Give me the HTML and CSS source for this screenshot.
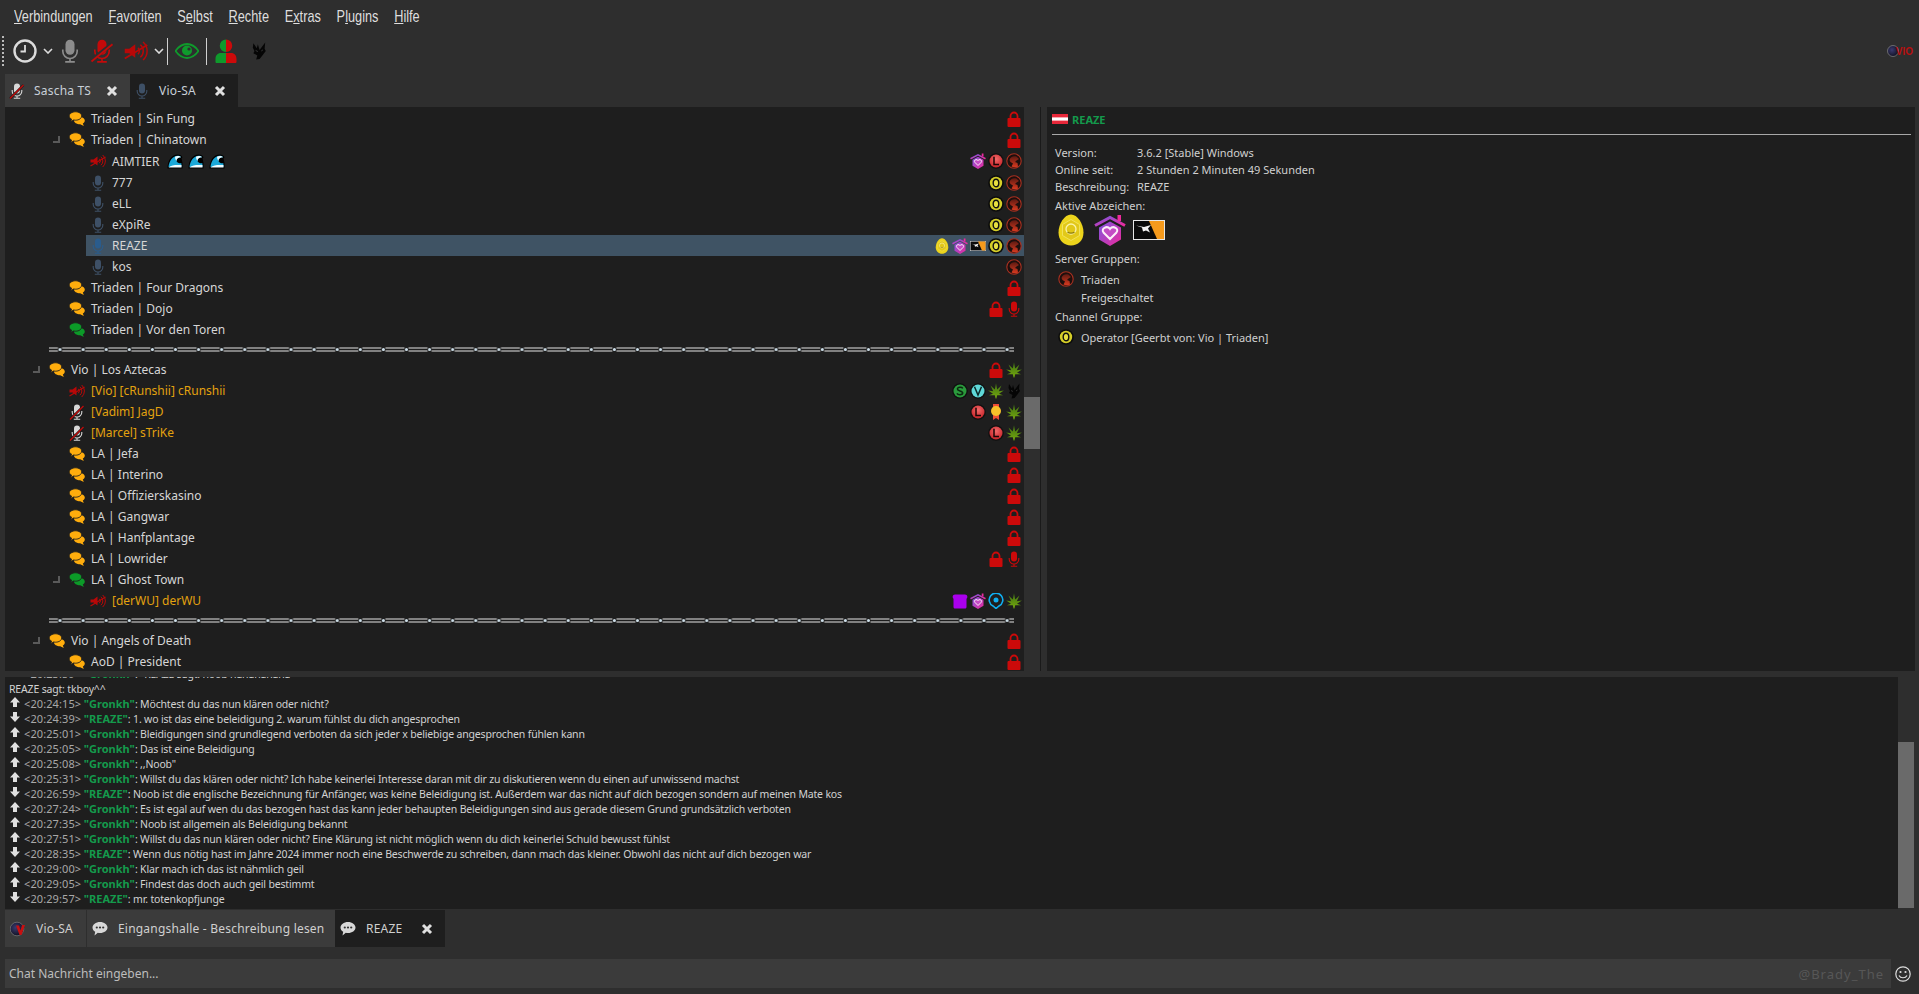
FILE: index.html
```html
<!DOCTYPE html>
<html lang="de">

<head>
    <meta charset="UTF-8">
    <title>TeamSpeak 3</title>
    <link rel="stylesheet" href="styles.css">
</head>

<body>
    <!-- shared icons -->
    <svg class="defs" xmlns="http://www.w3.org/2000/svg">
        <defs>
            <linearGradient id="house-grad" x1="0" y1="0" x2="1" y2="1">
                <stop offset="0" stop-color="#7d55e0" />
                <stop offset="1" stop-color="#ee2a9c" />
            </linearGradient>
            <radialGradient id="red-ball" cx="0.5" cy="0.35" r="0.7">
                <stop offset="0" stop-color="#f26a6a" />
                <stop offset="1" stop-color="#c41e24" />
            </radialGradient>
            <radialGradient id="logo-ball" cx="0.4" cy="0.4" r="0.7">
                <stop offset="0" stop-color="#3a3a70" />
                <stop offset="1" stop-color="#0c0c18" />
            </radialGradient>
            <linearGradient id="triad-grad" x1="0" y1="0" x2="0" y2="1">
                <stop offset="0" stop-color="#5e1a12" />
                <stop offset="1" stop-color="#d83a20" />
            </linearGradient>
            <linearGradient id="weed-grad" x1="0" y1="0" x2="0" y2="1">
                <stop offset="0" stop-color="#3f7014" />
                <stop offset="1" stop-color="#74a80e" />
            </linearGradient>
            <pattern id="spacer-tile" width="23.100" height="7" patternUnits="userSpaceOnUse">
                <path d="M0 2h9M13 2h10.100M0 5h9M13 5h10.100" stroke="#e4e4e4" stroke-width="1" />
                <circle cx="11" cy="3.500" r="1.500" fill="#cfe0ea" />
            </pattern>
        </defs>
        <symbol id="mic" viewBox="0 0 16 16">
            <rect x="5" y="0.500" width="6" height="10" rx="3" fill="currentColor" />
            <path d="M3.200 7v1.200a4.800 4.800 0 0 0 9.600 0V7M8 13v2M4.800 15.200h6.400" fill="none" stroke="currentColor" stroke-width="1.100" />
        </symbol>
        <symbol id="mic-off" viewBox="0 0 16 16">
            <rect x="5" y="0.500" width="6" height="10" rx="3" fill="#d8d8d8" />
            <path d="M3.200 7v1.200a4.800 4.800 0 0 0 9.600 0V7M8 13v2M4.800 15.200h6.400" fill="none" stroke="#d8d8d8" stroke-width="1.100" />
            <path d="M1 15.500L14.500 2" stroke="#1e1e1e" stroke-width="2.400" />
            <path d="M1 15.500L14.500 2" stroke="#c40a0a" stroke-width="1.200" />
        </symbol>
        <symbol id="spk-off" viewBox="0 0 16 16">
            <path d="M0.500 6.500h3l4-3v9l-4-3h-3z" fill="#b80808" />
            <path d="M9.300 5.800a3 3 0 0 1 0 4.400M10.900 3.800a5.500 5.500 0 0 1 0 8.400M12.700 2a8 8 0 0 1 0 12" fill="none" stroke="#b80808" stroke-width="1" />
            <path d="M0.500 13L15.500 4" stroke="#b80808" stroke-width="1.300" />
        </symbol>
        <symbol id="lock" viewBox="0 0 16 16">
            <path d="M4.500 8V5a3.500 3.500 0 0 1 7 0v3" fill="none" stroke="#cc0a0a" stroke-width="1.800" />
            <rect x="1.500" y="7" width="13" height="9" rx="1" fill="#cc0a0a" />
        </symbol>
        <symbol id="bubbles" viewBox="0 0 16 16">
            <path d="M9 5.500c3.800 0 6.800 1.700 6.800 4 0 1.300-0.800 2.300-2 3l1 2.500-3.600-1.700C7.500 13.300 5 11.500 5 9.500s1.200-4 4-4z" fill="currentColor" />
            <path d="M6.500 0.800c3.300 0 6.200 1.800 6.200 4.200s-2.900 4.200-6.200 4.200c-0.700 0-1.400-0.100-2-0.200L1.800 10.800l0.700-2.700C1 7.300 0.200 6.200 0.200 5c0-2.400 3-4.200 6.300-4.200z" fill="currentColor" stroke="#1e1e1e" stroke-width="0.900" />
        </symbol>
        <symbol id="speech" viewBox="0 0 16 16">
            <path d="M8 1c4.200 0 7.500 2.500 7.500 5.500S12.200 12 8 12c-0.800 0-1.500-0.100-2.200-0.200L2.500 14.500l0.700-3.700C1.500 9.800 0.500 8.200 0.500 6.500 0.500 3.500 3.800 1 8 1z" fill="#d8d8d8" />
            <circle cx="4.800" cy="6.500" r="1.100" fill="#333" />
            <circle cx="8" cy="6.500" r="1.100" fill="#333" />
            <circle cx="11.200" cy="6.500" r="1.100" fill="#333" />
        </symbol>
        <symbol id="wave" viewBox="0 0 16 16">
            <path d="M0.500 15.500C0.500 7 5 1.500 10.500 1.500c2.500 0 4.500 1 5 3l-1 0.500 1 5v5.500z" fill="#000" />
            <path d="M1.500 14C2 8 6 2.800 10.500 2.800c1.800 0 3 .5 3.600 1.500C11.500 4.200 9.500 5.500 9.500 7.500c0 2 2.200 3 4.900 2.800V14z" fill="#1aa8d8" />
            <path d="M1.500 14.500c3-3 8-2.500 13-2.500v2.500zM8 3.800C10 2.500 12.800 2.800 14.100 4.300 11.500 4.200 9.500 5.500 9.500 8 8.500 7 8 5 8 3.800z" fill="#f0fcff" />
        </symbol>
        <symbol id="op" viewBox="0 0 16 16">
            <circle cx="8" cy="8" r="7.800" fill="#0c0c0c" />
            <circle cx="8" cy="8" r="6.200" fill="#d5ce28" />
            <ellipse cx="8" cy="8" rx="2.800" ry="3.800" fill="#e6df40" stroke="#111" stroke-width="1.400" />
        </symbol>
        <symbol id="ball-l" viewBox="0 0 16 16">
            <circle cx="8" cy="8" r="7.800" fill="#101010" />
            <circle cx="8" cy="8" r="6.500" fill="url(#red-ball)" />
            <path d="M6 3.800v7.700h5" fill="none" stroke="#1a0505" stroke-width="1.500" />
        </symbol>
        <symbol id="ball-s" viewBox="0 0 16 16">
            <circle cx="8" cy="8" r="7.800" fill="#101010" />
            <circle cx="8" cy="8" r="6.500" fill="#2a9a3c" />
            <path d="M10.800 5.300C10 4 5.600 3.800 5.400 6c-0.200 2.200 5.500 1.700 5.300 4.100-0.200 2-4.800 2-5.800 0.300" fill="none" stroke="#0c2a10" stroke-width="1.500" />
        </symbol>
        <symbol id="ball-v" viewBox="0 0 16 16">
            <circle cx="8" cy="8" r="7.800" fill="#101010" />
            <circle cx="8" cy="8" r="6.500" fill="#5fd8d8" />
            <path d="M4.500 3.800L8 12l3.500-8.200" fill="none" stroke="#0c2a2a" stroke-width="1.500" />
        </symbol>
        <symbol id="triad" viewBox="0 0 16 16">
            <circle cx="8" cy="8" r="7.200" fill="#1e0f0d" stroke="#a83020" stroke-width="1.100" />
            <path d="M3.500 7C4 3.500 8 2.500 10.500 3.500L13 6l-2.500 1.500L9 9l2.500 1 0.500 3.500c-1.500 1-5 1-6.500 0L7 10.500 4.500 9z" fill="url(#triad-grad)" />
        </symbol>
        <symbol id="weed" viewBox="0 0 16 16">
            <path d="M8 0.300L9.200 6.500 13.500 2.500 10.800 8.300 15.800 7.500 11 10.800 15 12.300 9.200 12.200 8.400 15.500H7.600L6.800 12.200 1 12.300 5 10.800 0.200 7.500 5.200 8.300 2.500 2.500 6.800 6.500z" fill="url(#weed-grad)" />
        </symbol>
        <symbol id="wolf" viewBox="0 0 16 16">
            <path d="M3 1l3 4.500 1-3.500 1.500 5L13.500 0.500 13 6l1 2-3 4-2.500 3-3 0.500 1-3.500L3 10l1-2-1.500-3z" fill="#050505" />
            <path d="M5 7.500l2 1M10 8l1.500-1" stroke="#3a3a3a" stroke-width="0.800" />
        </symbol>
        <symbol id="house" viewBox="0 0 32 32">
            <path d="M1 11.500L16 3.500l15 8" fill="none" stroke="url(#house-grad)" stroke-width="3" />
            <rect x="23.500" y="1" width="3.500" height="6" fill="#ee2a9c" />
            <path d="M16 7.500L27 13.500V25.500L16 32 5 25.500V13.500z" fill="url(#house-grad)" />
            <path d="M16 25l-6.500-6.500c-3-3.800 3.500-7.500 6.500-3.500 3-4 9.500-.3 6.500 3.500z" fill="#c44cc4" stroke="#fdeef8" stroke-width="2" />
        </symbol>
        <symbol id="egg" viewBox="0 0 26 32">
            <path d="M13 0.500c6.500 0 12.500 9.500 12.500 18 0 8-5.500 13-12.500 13S0.500 26.500 0.500 18.500c0-8.500 6-18 12.500-18z" fill="#ecd41c" />
            <path d="M13 5.500l8.500 5v11L13 26.500l-8.500-5v-11z" fill="#e2c818" stroke="#f4e66a" stroke-width="0.800" />
            <circle cx="13" cy="15" r="5" fill="none" stroke="#fbf3a8" stroke-width="1.300" />
            <path d="M9.500 18c1.500 1.500 5.500 1.500 7 0" fill="none" stroke="#8f7d0a" stroke-width="1.100" />
        </symbol>
        <symbol id="owl" viewBox="0 0 32 20">
            <rect x="0.500" y="0.500" width="31" height="19" fill="#0a0a0a" stroke="#e6e6e6" />
            <path d="M16 1H31V19H24z" fill="#f59a1c" />
            <path d="M3 5.500l8 1.500 7-2-3 3.500 2 4-4-2-3 1-1-4z" fill="#f2f2f2" />
        </symbol>
        <symbol id="bread" viewBox="0 0 16 16">
            <path d="M3 1.500h10c2.500 0 3 3 1.500 4.200V14c0 .8-.5 1.500-1.500 1.500H3c-1 0-1.500-.7-1.500-1.500V5.700C0 4.500.5 1.500 3 1.500z" fill="#aa00ee" />
        </symbol>
        <symbol id="pin" viewBox="0 0 16 16">
            <path d="M8 15.500L5 13A6.800 6.800 0 1 1 11 13z" fill="none" stroke="#10aef0" stroke-width="1.600" />
            <circle cx="8" cy="7" r="2.500" fill="#10aef0" />
        </symbol>
        <symbol id="medal" viewBox="0 0 16 16">
            <path d="M5 0h6v3H5zM5 11h6v5L8 14l-3 2z" fill="#ee4d36" />
            <circle cx="8" cy="7" r="5" fill="#f8c22a" />
        </symbol>
        <symbol id="vio" viewBox="0 0 16 16">
            <circle cx="7" cy="8" r="6.800" fill="url(#logo-ball)" stroke="#888" stroke-width="0.600" />
            <path d="M6 4.500h3l1.500 5 1.500-5.500h3L11.500 14h-2z" fill="#c81010" />
        </symbol>
        <symbol id="x" viewBox="0 0 12 12">
            <path d="M2 2l8 8M10 2l-8 8" stroke="#e0e0e0" stroke-width="3" />
        </symbol>
        <symbol id="up" viewBox="0 0 12 12">
            <path d="M6 1L11 6.500H8V11H4V6.500H1z" fill="#e0e0e0" />
        </symbol>
        <symbol id="down" viewBox="0 0 12 12">
            <path d="M6 11L11 5.500H8V1H4V5.500H1z" fill="#e0e0e0" />
        </symbol>
        <symbol id="spacer-art" viewBox="0 0 966 7" preserveAspectRatio="xMinYMid slice">
            <rect width="966" height="7" fill="url(#spacer-tile)" />
        </symbol>
    </svg>

    <!-- Menu -->
    <div class="menubar">
        <div class="menu-items">
            <span><u>V</u>erbindungen</span>
            <span><u>F</u>avoriten</span>
            <span>S<u>e</u>lbst</span>
            <span><u>R</u>echte</span>
            <span>E<u>x</u>tras</span>
            <span>P<u>l</u>ugins</span>
            <span><u>H</u>ilfe</span>
        </div>
    </div>

    <!-- Toolbar -->
    <div class="toolbar">
        <span class="grip"></span>
        <svg class="tool t-clock" viewBox="0 0 24 24">
            <circle cx="12" cy="12" r="10.500" fill="none" stroke="#dcdcdc" stroke-width="2.400" />
            <path d="M12 6v6.500H7.500" fill="none" stroke="#dcdcdc" stroke-width="1.800" />
        </svg>
        <svg class="chev" viewBox="0 0 10 6"><path d="M1 1l4 4 4-4" fill="none" stroke="#dcdcdc" stroke-width="1.600" /></svg>
        <svg class="tool t-mic"><use href="#mic" /></svg>
        <svg class="tool t-redmic" viewBox="0 0 16 16">
            <rect x="5" y="0.500" width="6" height="10" rx="3" fill="#c40a0a" />
            <path d="M3.200 7v1.200a4.800 4.800 0 0 0 9.600 0V7M8 13v2M4.800 15.200h6.400" fill="none" stroke="#c40a0a" stroke-width="1.100" />
            <path d="M1 14L15 3" stroke="#2e2e2e" stroke-width="2.400" />
            <path d="M1 15L15 3.500" stroke="#c40a0a" stroke-width="1.200" />
        </svg>
        <svg class="tool t-spk"><use href="#spk-off" /></svg>
        <svg class="chev" viewBox="0 0 10 6"><path d="M1 1l4 4 4-4" fill="none" stroke="#dcdcdc" stroke-width="1.600" /></svg>
        <span class="tsep"></span>
        <svg class="tool t-eye" viewBox="0 0 24 16">
            <path d="M0.500 8C4 3 8 1 12 1s8 2 11.500 7C20 13 16 15 12 15S4 13 0.500 8z" fill="none" stroke="#0f9a2c" stroke-width="1.800" />
            <circle cx="12" cy="7.500" r="5" fill="#0f9a2c" />
            <circle cx="14" cy="6" r="1.600" fill="#2e2e2e" />
        </svg>
        <span class="tsep tsep-second"></span>
        <svg class="tool t-user" viewBox="0 0 22 24">
            <path d="M11 0.500a6 6 0 0 0 0 12.500zM11 14H6c-3.500 0-5.500 2.500-5.500 6v3c0 .5.500 1 1 1H11z" fill="#0f9a2c" />
            <path d="M11 0.500a6 6 0 0 1 0 12.500zM11 14h5c3.500 0 5.500 2.500 5.500 6v3c0 .5-.5 1-1 1H11z" fill="#cc0a0a" />
        </svg>
        <svg class="tool t-wolf"><use href="#wolf" /></svg>
        <span class="logo">
            <svg class="ic-logo" viewBox="0 0 12 12"><circle cx="6" cy="6" r="5.500" fill="url(#logo-ball)" stroke="#999" stroke-width="0.600" /></svg>
            <b class="logo-text">VIO</b>
        </span>
    </div>

    <!-- Server tabs -->
    <div class="tabbar">
        <div class="tab tab-off">
            <svg class="ic"><use href="#mic-off" /></svg>
            <span class="tab-name">Sascha TS</span>
            <svg class="close"><use href="#x" /></svg>
        </div>
        <div class="tab tab-on tab-vio">
            <svg class="ic mic-blue"><use href="#mic" /></svg>
            <span class="tab-name">Vio-SA</span>
            <svg class="close"><use href="#x" /></svg>
        </div>
    </div>

    <div class="main">
        <!-- Channel tree -->
        <div class="tree-panel">
            <div class="tree">
                <div class="row ch"><svg class="ic orange"><use href="#bubbles" /></svg><span>Triaden | Sin Fung</span><span class="flags"><svg class="ic"><use href="#lock" /></svg></span></div>
                <div class="row ch twigged"><i class="twig"></i><svg class="ic orange"><use href="#bubbles" /></svg><span>Triaden | Chinatown</span><span class="flags"><svg class="ic"><use href="#lock" /></svg></span></div>
                <div class="row cl tall"><svg class="ic"><use href="#spk-off" /></svg><span>AIMTIER</span><span class="waves"><svg class="ic"><use href="#wave" /></svg><svg class="ic"><use href="#wave" /></svg><svg class="ic"><use href="#wave" /></svg></span><span class="flags"><svg class="ic"><use href="#house" /></svg><svg class="ic"><use href="#ball-l" /></svg><svg class="ic"><use href="#triad" /></svg></span></div>
                <div class="row cl"><svg class="ic mic-blue"><use href="#mic" /></svg><span>777</span><span class="flags"><svg class="ic"><use href="#op" /></svg><svg class="ic"><use href="#triad" /></svg></span></div>
                <div class="row cl"><svg class="ic mic-blue"><use href="#mic" /></svg><span>eLL</span><span class="flags"><svg class="ic"><use href="#op" /></svg><svg class="ic"><use href="#triad" /></svg></span></div>
                <div class="row cl"><svg class="ic mic-blue"><use href="#mic" /></svg><span>eXpiRe</span><span class="flags"><svg class="ic"><use href="#op" /></svg><svg class="ic"><use href="#triad" /></svg></span></div>
                <div class="row cl selected"><svg class="ic mic-sel"><use href="#mic" /></svg><span>REAZE</span><span class="flags"><svg class="ic"><use href="#egg" /></svg><svg class="ic"><use href="#house" /></svg><svg class="ic"><use href="#owl" /></svg><svg class="ic"><use href="#op" /></svg><svg class="ic"><use href="#triad" /></svg></span></div>
                <div class="row cl"><svg class="ic mic-blue"><use href="#mic" /></svg><span>kos</span><span class="flags"><svg class="ic"><use href="#triad" /></svg></span></div>
                <div class="row ch"><svg class="ic orange"><use href="#bubbles" /></svg><span>Triaden | Four Dragons</span><span class="flags"><svg class="ic"><use href="#lock" /></svg></span></div>
                <div class="row ch"><svg class="ic orange"><use href="#bubbles" /></svg><span>Triaden | Dojo</span><span class="flags"><svg class="ic"><use href="#lock" /></svg><svg class="ic red"><use href="#mic" /></svg></span></div>
                <div class="row ch"><svg class="ic green"><use href="#bubbles" /></svg><span>Triaden | Vor den Toren</span></div>
                <div class="row spacer"><svg class="spacer-line"><use href="#spacer-art" /></svg></div>
                <div class="row top twigged"><i class="twig"></i><svg class="ic orange"><use href="#bubbles" /></svg><span>Vio | Los Aztecas</span><span class="flags"><svg class="ic"><use href="#lock" /></svg><svg class="ic"><use href="#weed" /></svg></span></div>
                <div class="row ch"><svg class="ic"><use href="#spk-off" /></svg><span class="gold">[Vio] [cRunshii] cRunshii</span><span class="flags"><svg class="ic"><use href="#ball-s" /></svg><svg class="ic"><use href="#ball-v" /></svg><svg class="ic"><use href="#weed" /></svg><svg class="ic"><use href="#wolf" /></svg></span></div>
                <div class="row ch"><svg class="ic"><use href="#mic-off" /></svg><span class="gold">[Vadim] JagD</span><span class="flags"><svg class="ic"><use href="#ball-l" /></svg><svg class="ic"><use href="#medal" /></svg><svg class="ic"><use href="#weed" /></svg></span></div>
                <div class="row ch"><svg class="ic"><use href="#mic-off" /></svg><span class="gold">[Marcel] sTriKe</span><span class="flags"><svg class="ic"><use href="#ball-l" /></svg><svg class="ic"><use href="#weed" /></svg></span></div>
                <div class="row ch"><svg class="ic orange"><use href="#bubbles" /></svg><span>LA | Jefa</span><span class="flags"><svg class="ic"><use href="#lock" /></svg></span></div>
                <div class="row ch"><svg class="ic orange"><use href="#bubbles" /></svg><span>LA | Interino</span><span class="flags"><svg class="ic"><use href="#lock" /></svg></span></div>
                <div class="row ch"><svg class="ic orange"><use href="#bubbles" /></svg><span>LA | Offizierskasino</span><span class="flags"><svg class="ic"><use href="#lock" /></svg></span></div>
                <div class="row ch"><svg class="ic orange"><use href="#bubbles" /></svg><span>LA | Gangwar</span><span class="flags"><svg class="ic"><use href="#lock" /></svg></span></div>
                <div class="row ch"><svg class="ic orange"><use href="#bubbles" /></svg><span>LA | Hanfplantage</span><span class="flags"><svg class="ic"><use href="#lock" /></svg></span></div>
                <div class="row ch"><svg class="ic orange"><use href="#bubbles" /></svg><span>LA | Lowrider</span><span class="flags"><svg class="ic"><use href="#lock" /></svg><svg class="ic red"><use href="#mic" /></svg></span></div>
                <div class="row ch twigged"><i class="twig"></i><svg class="ic green"><use href="#bubbles" /></svg><span>LA | Ghost Town</span></div>
                <div class="row cl"><svg class="ic"><use href="#spk-off" /></svg><span class="gold">[derWU] derWU</span><span class="flags"><svg class="ic"><use href="#bread" /></svg><svg class="ic"><use href="#house" /></svg><svg class="ic"><use href="#pin" /></svg><svg class="ic"><use href="#weed" /></svg></span></div>
                <div class="row spacer"><svg class="spacer-line"><use href="#spacer-art" /></svg></div>
                <div class="row top twigged"><i class="twig"></i><svg class="ic orange"><use href="#bubbles" /></svg><span>Vio | Angels of Death</span><span class="flags"><svg class="ic"><use href="#lock" /></svg></span></div>
                <div class="row ch"><svg class="ic orange"><use href="#bubbles" /></svg><span>AoD | President</span><span class="flags"><svg class="ic"><use href="#lock" /></svg></span></div>
            </div>
            <div class="scroll"><div class="thumb tree-thumb"></div></div>
        </div>

        <!-- Client info -->
        <div class="info">
            <div class="info-head">
                <svg class="flag" viewBox="0 0 16 10">
                    <rect width="16" height="10" fill="#e8283a" />
                    <rect y="3.400" width="16" height="3.200" fill="#fff" />
                </svg>
                <b>REAZE</b>
            </div>
            <div class="facts">
                <span>Version:</span><span>3.6.2 [Stable] Windows</span>
                <span>Online seit:</span><span>2 Stunden 2 Minuten 49 Sekunden</span>
                <span>Beschreibung:</span><span>REAZE</span>
            </div>
            <div class="title">Aktive Abzeichen:</div>
            <div class="badges">
                <svg class="badge-egg"><use href="#egg" /></svg>
                <svg class="badge-house"><use href="#house" /></svg>
                <svg class="badge-owl"><use href="#owl" /></svg>
            </div>
            <div class="title">Server Gruppen:</div>
            <div class="group group-first"><svg class="ic"><use href="#triad" /></svg><span>Triaden</span></div>
            <div class="group"><i class="ic"></i><span>Freigeschaltet</span></div>
            <div class="title">Channel Gruppe:</div>
            <div class="group group-first"><svg class="ic"><use href="#op" /></svg><span>Operator [Geerbt von: Vio | Triaden]</span></div>
        </div>
    </div>

    <!-- Chat log -->
    <div class="chat-panel">
        <div class="chat">
            <div class="log">
                <div class="line"><svg class="arr"><use href="#up" /></svg><span><span class="ts">&lt;20:23:59&gt;</span> <b>"Gronkh"</b>: "REAZE sagt: noob hahahahaha</span></div>
                <div class="line plain">REAZE sagt: tkboy^^</div>
                <div class="line"><svg class="arr"><use href="#up" /></svg><span><span class="ts">&lt;20:24:15&gt;</span> <b>"Gronkh"</b>: Möchtest du das nun klären oder nicht?</span></div>
                <div class="line"><svg class="arr"><use href="#down" /></svg><span><span class="ts">&lt;20:24:39&gt;</span> <b>"REAZE"</b>: 1. wo ist das eine beleidigung 2. warum fühlst du dich angesprochen</span></div>
                <div class="line"><svg class="arr"><use href="#up" /></svg><span><span class="ts">&lt;20:25:01&gt;</span> <b>"Gronkh"</b>: Bleidigungen sind grundlegend verboten da sich jeder x beliebige angesprochen fühlen kann</span></div>
                <div class="line"><svg class="arr"><use href="#up" /></svg><span><span class="ts">&lt;20:25:05&gt;</span> <b>"Gronkh"</b>: Das ist eine Beleidigung</span></div>
                <div class="line"><svg class="arr"><use href="#up" /></svg><span><span class="ts">&lt;20:25:08&gt;</span> <b>"Gronkh"</b>: ,,Noob"</span></div>
                <div class="line"><svg class="arr"><use href="#up" /></svg><span><span class="ts">&lt;20:25:31&gt;</span> <b>"Gronkh"</b>: Willst du das klären oder nicht? Ich habe keinerlei Interesse daran mit dir zu diskutieren wenn du einen auf unwissend machst</span></div>
                <div class="line"><svg class="arr"><use href="#down" /></svg><span><span class="ts">&lt;20:26:59&gt;</span> <b>"REAZE"</b>: Noob ist die englische Bezeichnung für Anfänger, was keine Beleidigung ist. Außerdem war das nicht auf dich bezogen sondern auf meinen Mate kos</span></div>
                <div class="line"><svg class="arr"><use href="#up" /></svg><span><span class="ts">&lt;20:27:24&gt;</span> <b>"Gronkh"</b>: Es ist egal auf wen du das bezogen hast das kann jeder behaupten Beleidigungen sind aus gerade diesem Grund grundsätzlich verboten</span></div>
                <div class="line"><svg class="arr"><use href="#up" /></svg><span><span class="ts">&lt;20:27:35&gt;</span> <b>"Gronkh"</b>: Noob ist allgemein als Beleidigung bekannt</span></div>
                <div class="line"><svg class="arr"><use href="#up" /></svg><span><span class="ts">&lt;20:27:51&gt;</span> <b>"Gronkh"</b>: Willst du das nun klären oder nicht? Eine Klärung ist nicht möglich wenn du dich keinerlei Schuld bewusst fühlst</span></div>
                <div class="line"><svg class="arr"><use href="#down" /></svg><span><span class="ts">&lt;20:28:35&gt;</span> <b>"REAZE"</b>: Wenn dus nötig hast im Jahre 2024 immer noch eine Beschwerde zu schreiben, dann mach das kleiner. Obwohl das nicht auf dich bezogen war</span></div>
                <div class="line"><svg class="arr"><use href="#up" /></svg><span><span class="ts">&lt;20:29:00&gt;</span> <b>"Gronkh"</b>: Klar mach ich das ist nähmlich geil</span></div>
                <div class="line"><svg class="arr"><use href="#up" /></svg><span><span class="ts">&lt;20:29:05&gt;</span> <b>"Gronkh"</b>: Findest das doch auch geil bestimmt</span></div>
                <div class="line"><svg class="arr"><use href="#down" /></svg><span><span class="ts">&lt;20:29:57&gt;</span> <b>"REAZE"</b>: mr. totenkopfjunge</span></div>
            </div>
        </div>
        <div class="scroll chat-scroll"><div class="thumb chat-thumb"></div></div>
    </div>

    <!-- Chat tabs -->
    <div class="chat-tabs">
        <div class="ctab ctab-server"><svg class="ic"><use href="#vio" /></svg><span>Vio-SA</span></div>
        <div class="ctab ctab-channel"><svg class="ic"><use href="#speech" /></svg><span>Eingangshalle - Beschreibung lesen</span></div>
        <div class="ctab ctab-on"><svg class="ic"><use href="#speech" /></svg><span class="ctab-name">REAZE</span><svg class="close"><use href="#x" /></svg></div>
    </div>

    <!-- Input -->
    <div class="input-row">
        <div class="input">
            <span>Chat Nachricht eingeben...</span>
            <span class="mark">@Brady_The</span>
        </div>
        <svg class="smile" viewBox="0 0 16 16">
            <circle cx="8" cy="8" r="7.200" fill="none" stroke="#dcdcdc" stroke-width="1.200" />
            <circle cx="5.500" cy="6" r="1.100" fill="#dcdcdc" />
            <circle cx="10.500" cy="6" r="1.100" fill="#dcdcdc" />
            <path d="M4 9.500c1.500 3 6.500 3 8 0" fill="none" stroke="#dcdcdc" stroke-width="1.200" />
        </svg>
    </div>
</body>

</html>
```

FILE: styles.css
```css
html,
body {
    height: 100%;
}

body {
    font-family: "Noto Sans", sans-serif;
    font-size: 12px;
    display: flex;
    flex-direction: column;
    height: 994px;
    margin: 0;
    overflow: hidden;
    background-color: #2e2e2e;
    color: #d6d6d6;
}

.defs {
    position: absolute;
    width: 0;
    height: 0;
}

.ic {
    display: block;
    flex: none;
    width: 16px;
    height: 16px;
}

.orange {
    color: #ffad0d;
}

.green {
    color: #0c9a28;
}

.red {
    color: #cc0a0a;
}

.gold {
    color: #e3a20f;
}

.mic-blue {
    color: #3e5066;
}

.mic-sel {
    color: #2a5c8c;
}

/* menu */
.menubar {
    flex: none;
    height: 32px;
    padding-left: 14px;
    padding-top: 1px;
    box-sizing: border-box;
}

.menu-items {
    display: flex;
    align-items: center;
    gap: 21px;
    height: 31px;
    font-family: "Liberation Sans", sans-serif;
    font-size: 17px;
    color: #dedede;
    transform: scaleX(0.75);
    transform-origin: left center;
}

/* toolbar */
.toolbar {
    display: flex;
    align-items: center;
    flex: none;
    box-sizing: border-box;
    height: 42px;
    padding: 0 6px 4px 2px;
}

.grip {
    width: 2px;
    height: 30px;
    margin-right: 9px;
    background: repeating-linear-gradient(to bottom, #bbb 0, #bbb 2px, transparent 2px, transparent 4px);
}

.tool {
    display: block;
    flex: none;
}

.t-clock {
    width: 24px;
    height: 24px;
}

.chev {
    flex: none;
    width: 10px;
    height: 6px;
    margin: 0 6px 0 6px;
}

.t-mic {
    width: 24px;
    height: 26px;
    margin-left: -1px;
    color: #8c8c8c;
}

.t-redmic {
    width: 24px;
    height: 26px;
    margin-left: 8px;
}

.t-spk {
    width: 24px;
    height: 24px;
    margin-left: 10px;
}

.t-spk + .chev {
    margin: 0 3px 0 6px;
}

.tsep {
    flex: none;
    width: 1px;
    height: 27px;
    background-color: #d0d0d0;
}

.t-eye {
    width: 24px;
    height: 16px;
    margin: 0 7px 0 7px;
}

.t-user {
    width: 22px;
    height: 24px;
    margin-left: 8px;
}

.t-wolf {
    width: 18px;
    height: 18px;
    margin-left: 13px;
}

.logo {
    display: flex;
    align-items: center;
    margin-left: auto;
}

.ic-logo {
    flex: none;
    width: 12px;
    height: 12px;
}

.logo-text {
    margin-left: -3px;
    font-family: "Liberation Sans", sans-serif;
    font-size: 10px;
    color: #b81010;
}

/* server tabs */
.tabbar {
    display: flex;
    flex: none;
    height: 33px;
    padding-left: 5px;
}

.tab {
    display: flex;
    align-items: center;
    position: relative;
    width: 125px;
    padding-left: 4px;
    box-sizing: border-box;
    letter-spacing: 0.2px;
    color: #c8d0d8;
}

.tab-off {
    background-color: #3b3b3b;
}

.tab-on {
    background-color: #1e1e1e;
}

.tab-vio {
    width: 108px;
}

.tab-name {
    margin-left: 9px;
}

.close {
    flex: none;
    width: 12px;
    height: 12px;
    margin-left: auto;
    margin-right: 12px;
}

/* main area */
.main {
    display: flex;
    flex: none;
    height: 564px;
    padding: 0 4px 0 5px;
    gap: 6px;
}

.tree-panel {
    display: flex;
    width: 1036px;
    flex: none;
    background-color: #1e1e1e;
    border-right: 1px solid #1a1a1a;
    box-sizing: border-box;
}

.tree {
    flex: 1;
    min-width: 0;
    padding-top: 1px;
    overflow: hidden;
}

.scroll {
    flex: none;
    position: relative;
    width: 16px;
    background-color: #2e2e2e;
}

.thumb {
    position: absolute;
    left: 0;
    width: 16px;
    background-color: #6a6a6a;
}

.tree-thumb {
    top: 290px;
    height: 52px;
}

.row {
    display: flex;
    align-items: center;
    gap: 6px;
    height: 21px;
    padding-right: 2px;
    white-space: nowrap;
}

.tall {
    height: 22px;
}

.ch {
    padding-left: 64px;
}

.top {
    padding-left: 44px;
}

.cl {
    margin-left: 81px;
    padding-left: 4px;
}

.ch.twigged {
    padding-left: 48px;
}

.top.twigged {
    padding-left: 28px;
}

.twigged {
    gap: 0;
}

.twigged > span:not(.flags) {
    margin-left: 6px;
}

.twig {
    flex: none;
    box-sizing: border-box;
    width: 7px;
    height: 7px;
    margin-right: 9px;
    border-right: 2px solid #5a5a5a;
    border-bottom: 2px solid #5a5a5a;
}

.selected {
    background-color: #3f5364;
}

.waves {
    display: flex;
    gap: 5px;
    margin-left: 1px;
}

.flags {
    display: flex;
    gap: 2px;
    margin-left: auto;
}

.spacer {
    height: 19px;
    padding-left: 44px;
    padding-right: 10px;
}

.spacer-line {
    display: block;
    width: 966px;
    height: 7px;
}

/* client info */
.info {
    flex: 1;
    min-width: 0;
    background-color: #1e1e1e;
    padding: 0 4px 0 5px;
    font-size: 11px;
    color: #d0d0d0;
}

.info-head {
    display: flex;
    align-items: center;
    gap: 4px;
    box-sizing: border-box;
    height: 28px;
    padding-bottom: 3px;
    border-bottom: 1px solid #a8a8a8;
    color: #149a4c;
}

.flag {
    display: block;
    width: 16px;
    height: 10px;
}

.facts {
    display: grid;
    grid-template-columns: 82px 1fr;
    grid-auto-rows: 17px;
    align-items: center;
    margin-top: 9px;
    padding-left: 3px;
}

.title {
    display: flex;
    align-items: center;
    height: 17px;
    margin-top: 2px;
    padding-left: 3px;
}

.badges {
    display: flex;
    align-items: flex-start;
    height: 34px;
    padding-left: 6px;
}

.badge-egg {
    width: 26px;
    height: 32px;
}

.badge-house {
    width: 32px;
    height: 32px;
    margin-left: 10px;
}

.badge-owl {
    width: 32px;
    height: 20px;
    margin-top: 6px;
    margin-left: 7px;
}

.group {
    display: flex;
    align-items: center;
    gap: 7px;
    height: 18px;
    padding-left: 6px;
}

.group-first {
    margin-top: 3px;
}

/* chat */
.chat-panel {
    display: flex;
    flex: none;
    height: 232px;
    margin-top: 6px;
    padding-left: 5px;
    padding-right: 5px;
}

.chat {
    flex: 1;
    min-width: 0;
    overflow: hidden;
    background-color: #1e1e1e;
}

.chat-thumb {
    top: 65px;
    height: 166px;
}

.log {
    margin-top: -11px;
    padding-left: 4px;
    font-size: 10.5px;
    letter-spacing: -0.17px;
}

.line {
    display: flex;
    align-items: center;
    gap: 3px;
    height: 15px;
    white-space: pre;
    color: #d2d2d2;
}

.line b {
    font-size: 11px;
    letter-spacing: 0;
    color: #149a4c;
}

.ts {
    font-size: 11px;
    letter-spacing: 0.1px;
    color: #a8a8a8;
}

.arr {
    display: block;
    flex: none;
    width: 12px;
    height: 12px;
    margin-top: -3px;
}

/* chat tabs */
.chat-tabs {
    display: flex;
    flex: none;
    height: 37px;
    margin-top: 1px;
    padding-left: 5px;
}

.ctab {
    display: flex;
    align-items: center;
    gap: 10px;
    box-sizing: border-box;
    padding-left: 5px;
    letter-spacing: 0.2px;
    color: #d0d0d0;
}

.ctab-server {
    width: 81px;
    margin-right: 1px;
    background-color: #3b3b3b;
}

.ctab-channel {
    width: 248px;
    background-color: #3b3b3b;
}

.ctab-on {
    width: 110px;
    background-color: #1e1e1e;
}

.ctab-on .close {
    margin-right: 12px;
}

/* input */
.input-row {
    display: flex;
    align-items: center;
    flex: none;
    height: 29px;
    margin-top: 12px;
    padding-left: 5px;
}

.input {
    display: flex;
    align-items: center;
    justify-content: space-between;
    width: 1886px;
    height: 29px;
    box-sizing: border-box;
    padding: 0 7px 0 4px;
    background-color: #3b3b3b;
    color: #bdbdbd;
}

.mark {
    font-size: 13px;
    letter-spacing: 1px;
    color: #575757;
}

.smile {
    display: block;
    flex: none;
    width: 16px;
    height: 16px;
    margin-left: 4px;
}
```
